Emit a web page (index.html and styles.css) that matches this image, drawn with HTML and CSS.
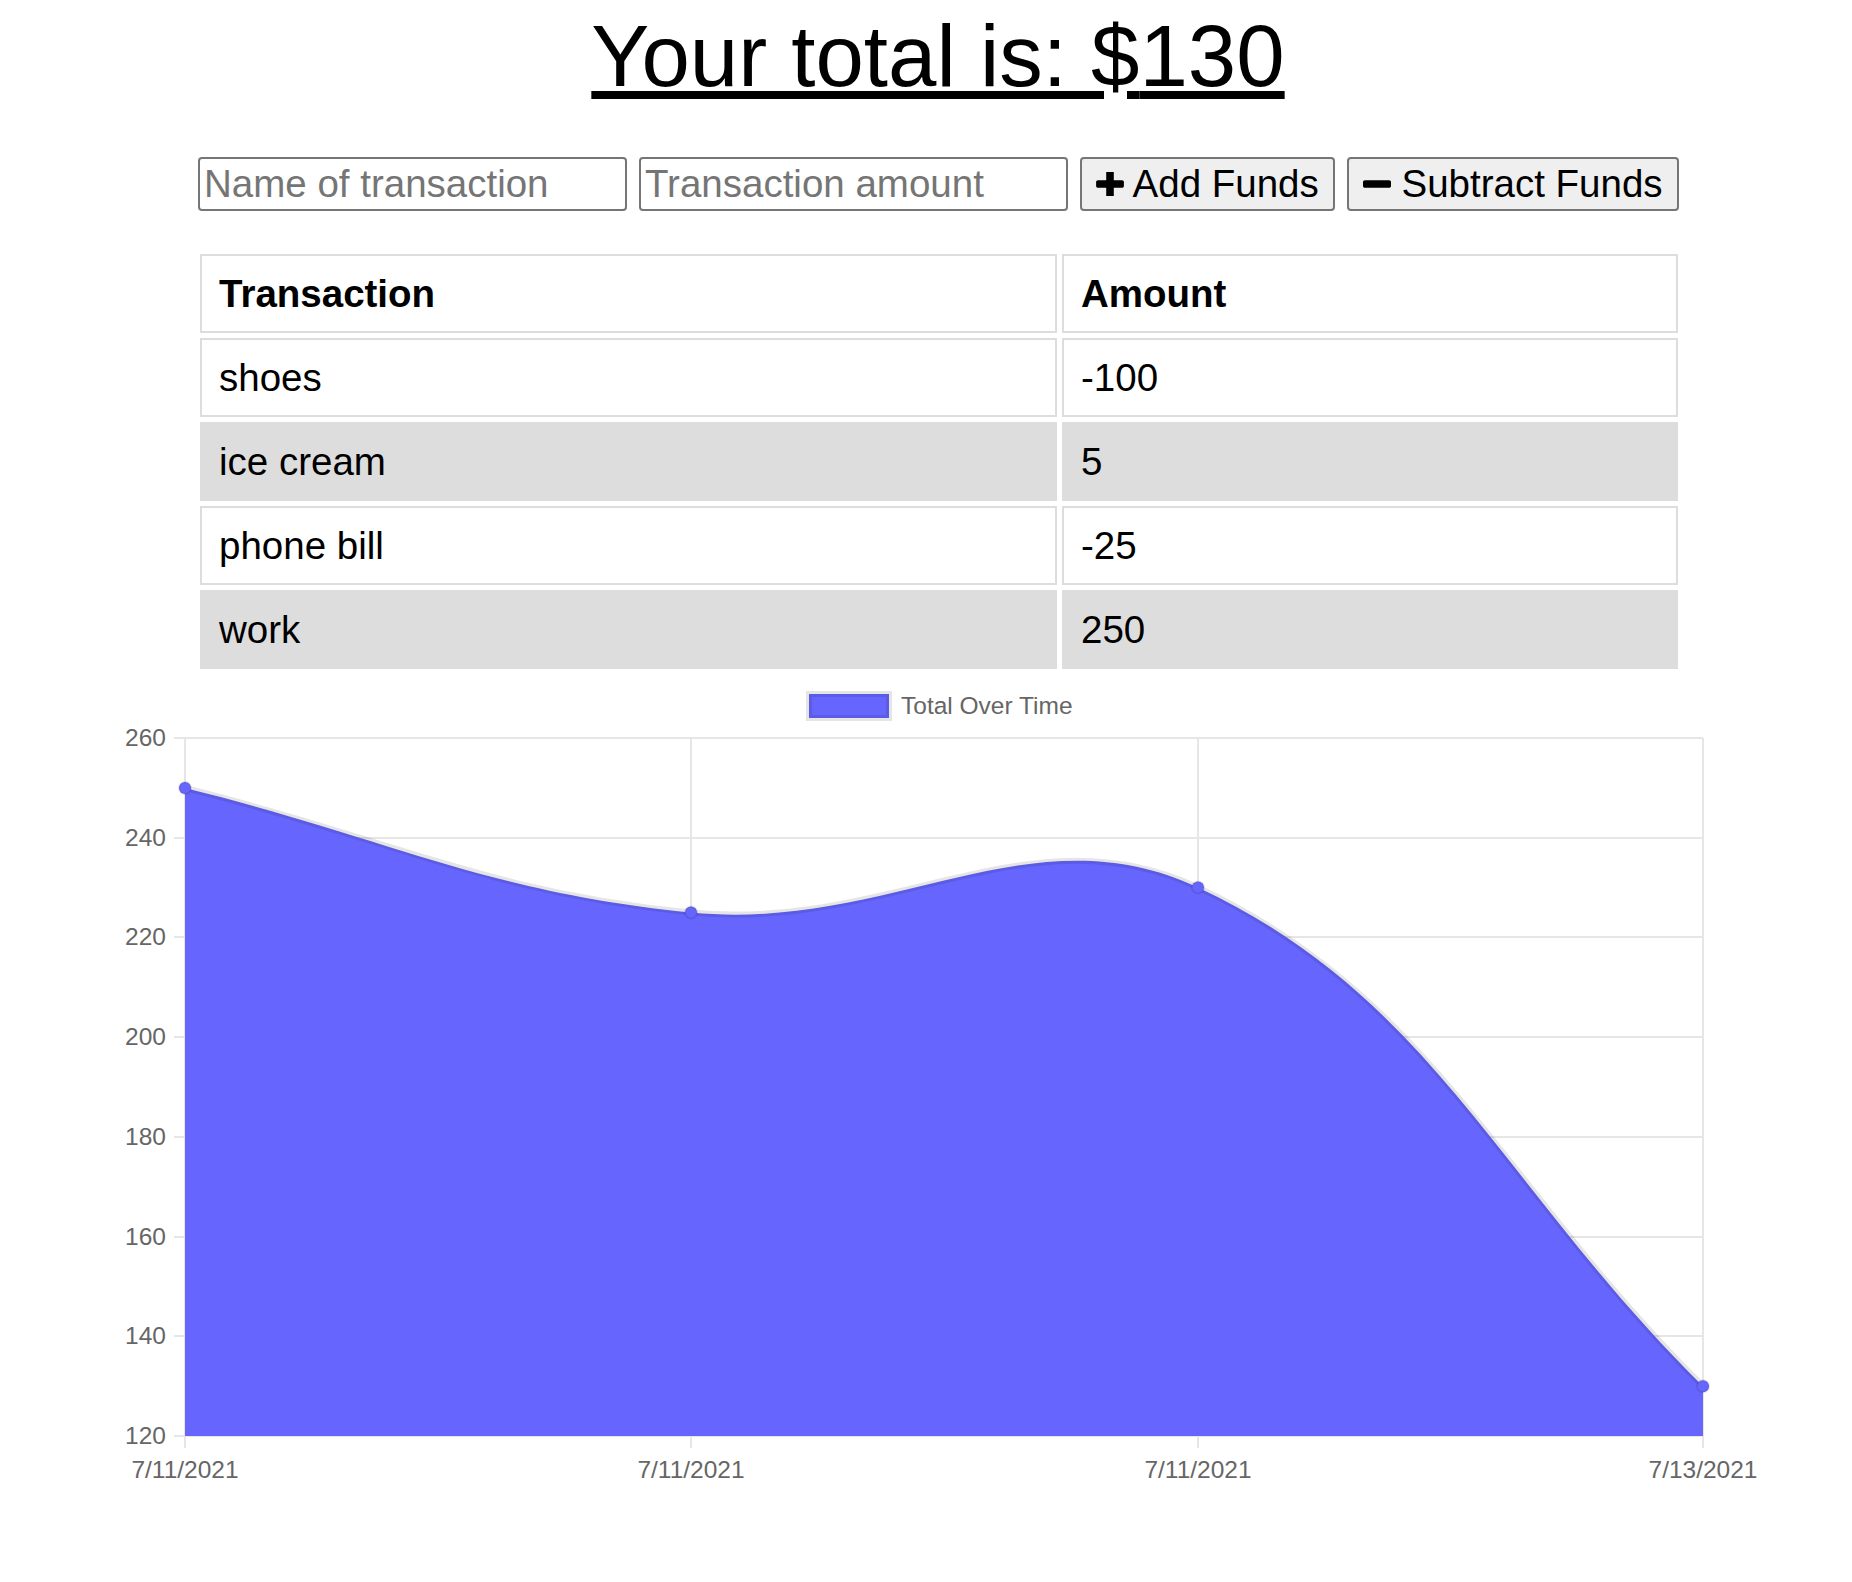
FILE: index.html
```html
<!DOCTYPE html>
<html lang="en">
<head>
<meta charset="utf-8">
<title>Budget Tracker</title>
<link rel="stylesheet" href="styles.css">
</head>
<body>
<div class="page">
  <h1 class="total">Your total is: $<span id="total">130</span></h1>

  <div class="form">
    <input class="field" type="text" placeholder="Name of transaction">
    <input class="field" type="number" placeholder="Transaction amount">
    <button class="btn"><svg class="icon icon-plus" viewBox="0 288 1408 1216" width="28" height="24"><path d="M1408 800v192q0 40-28 68t-68 28h-416v416q0 40-28 68t-68 28h-192q-40 0-68-28t-28-68v-416h-416q-40 0-68-28t-28-68v-192q0-40 28-68t68-28h416v-416q0-40 28-68t68-28h192q40 0 68 28t28 68v416h416q40 0 68 28t28 68z"/></svg> Add Funds</button>
    <button class="btn"><svg class="icon icon-minus" viewBox="0 704 1408 384" width="28" height="8"><path d="M1408 800v192q0 40-28 68t-68 28h-1216q-40 0-68-28t-28-68v-192q0-40 28-68t68-28h1216q40 0 68 28t28 68z"/></svg> Subtract Funds</button>
  </div>

  <table class="transactions">
    <thead>
      <tr><th class="col-name">Transaction</th><th class="col-amount">Amount</th></tr>
    </thead>
    <tbody>
      <tr><td>shoes</td><td>-100</td></tr>
      <tr><td>ice cream</td><td>5</td></tr>
      <tr><td>phone bill</td><td>-25</td></tr>
      <tr><td>work</td><td>250</td></tr>
    </tbody>
  </table>
</div>

<div class="chart">
  <svg class="chart-svg" viewBox="0 680 1852 840" width="1852" height="840">
    <!-- legend -->
    <rect x="809" y="694" width="80" height="24" fill="#6666ff" stroke="rgba(0,0,0,0.1)" stroke-width="6"/>
    <text class="legend-label" x="901" y="714">Total Over Time</text>

    <!-- grid lines -->
    <g stroke="#e6e6e6" stroke-width="2">
      <line x1="174" y1="738" x2="1703" y2="738"/>
      <line x1="174" y1="838" x2="1703" y2="838"/>
      <line x1="174" y1="937" x2="1703" y2="937"/>
      <line x1="174" y1="1037" x2="1703" y2="1037"/>
      <line x1="174" y1="1137" x2="1703" y2="1137"/>
      <line x1="174" y1="1237" x2="1703" y2="1237"/>
      <line x1="174" y1="1336" x2="1703" y2="1336"/>
      <line x1="174" y1="1436" x2="1703" y2="1436"/>
      <line x1="185" y1="738" x2="185" y2="1448"/>
      <line x1="691" y1="738" x2="691" y2="1448"/>
      <line x1="1198" y1="738" x2="1198" y2="1448"/>
      <line x1="1703" y1="738" x2="1703" y2="1448"/>
    </g>

    <!-- y labels -->
    <g class="tick-label" text-anchor="end">
      <text x="166" y="746">260</text>
      <text x="166" y="846">240</text>
      <text x="166" y="945">220</text>
      <text x="166" y="1045">200</text>
      <text x="166" y="1145">180</text>
      <text x="166" y="1245">160</text>
      <text x="166" y="1344">140</text>
      <text x="166" y="1444">120</text>
    </g>

    <!-- x labels -->
    <g class="tick-label" text-anchor="middle">
      <text x="185" y="1478">7/11/2021</text>
      <text x="691" y="1478">7/11/2021</text>
      <text x="1198" y="1478">7/11/2021</text>
      <text x="1703" y="1478">7/13/2021</text>
    </g>

    <!-- area -->
    <path fill="#6666ff" d="M185 788 C387.4 837.8 485.7 892.4 691 912.5 C891 932.1 1029.2 808.4 1198 887.4 C1434 997.9 1501 1186.7 1703 1386.2 L1703 1436 L185 1436 Z"/>
    <path fill="none" stroke="rgba(0,0,0,0.1)" stroke-width="6" d="M185 788 C387.4 837.8 485.7 892.4 691 912.5 C891 932.1 1029.2 808.4 1198 887.4 C1434 997.9 1501 1186.7 1703 1386.2"/>

    <!-- points -->
    <g fill="#6666ff" stroke="rgba(0,0,0,0.1)" stroke-width="2">
      <circle cx="185" cy="788" r="6"/>
      <circle cx="691" cy="912.5" r="6"/>
      <circle cx="1198" cy="887.4" r="6"/>
      <circle cx="1703" cy="1386.2" r="6"/>
    </g>
  </svg>
</div>
</body>
</html>
```

FILE: styles.css
```css
html, body {
  margin: 0;
  padding: 0;
  background: #ffffff;
}

body {
  font-family: "Liberation Sans", Arial, Helvetica, sans-serif;
  color: #000000;
}

.page {
  width: 1480px;
  margin-left: 198px;
}

.total {
  margin: 5px 0 0;
  font-size: 87px;
  line-height: 101px;
  font-weight: normal;
  text-align: center;
  text-decoration: underline;
}

.form {
  display: flex;
  gap: 12px;
  margin-top: 51px;
  height: 54px;
}

.field {
  box-sizing: border-box;
  width: 429px;
  height: 54px;
  padding: 2px 4px;
  border: 2px solid #767676;
  border-radius: 4px;
  font-family: "Liberation Sans", Arial, Helvetica, sans-serif;
  font-size: 38.5px;
  color: #000000;
  background: #ffffff;
}

.field::placeholder {
  color: #757575;
}

.btn {
  box-sizing: border-box;
  height: 54px;
  padding: 2px 14px;
  border: 2px solid #767676;
  border-radius: 4px;
  background: #efefef;
  font-family: "Liberation Sans", Arial, Helvetica, sans-serif;
  font-size: 38.5px;
  color: #000000;
  display: flex;
  align-items: center;
  white-space: pre;
}

.icon {
  display: block;
  fill: #000000;
}

.transactions {
  margin-top: 38px;
  margin-left: -3px;
  width: 1488px;
  table-layout: fixed;
  border-collapse: separate;
  border-spacing: 5px;
  font-size: 38.5px;
}

.transactions th,
.transactions td {
  box-sizing: border-box;
  height: 79px;
  padding: 0 17px;
  border: 2px solid #dddddd;
  text-align: left;
  vertical-align: middle;
  background: #ffffff;
}

.transactions th {
  font-weight: bold;
}

.col-name {
  width: 857px;
}

.transactions tbody tr:nth-child(even) td {
  background: #dddddd;
}

.chart {
  margin-top: 6px;
}

.chart-svg {
  display: block;
}

.legend-label {
  font-family: "Liberation Sans", Arial, Helvetica, sans-serif;
  font-size: 24.5px;
  fill: #666666;
}

.tick-label text {
  font-family: "Liberation Sans", Arial, Helvetica, sans-serif;
  font-size: 24.5px;
  fill: #666666;
}
```
